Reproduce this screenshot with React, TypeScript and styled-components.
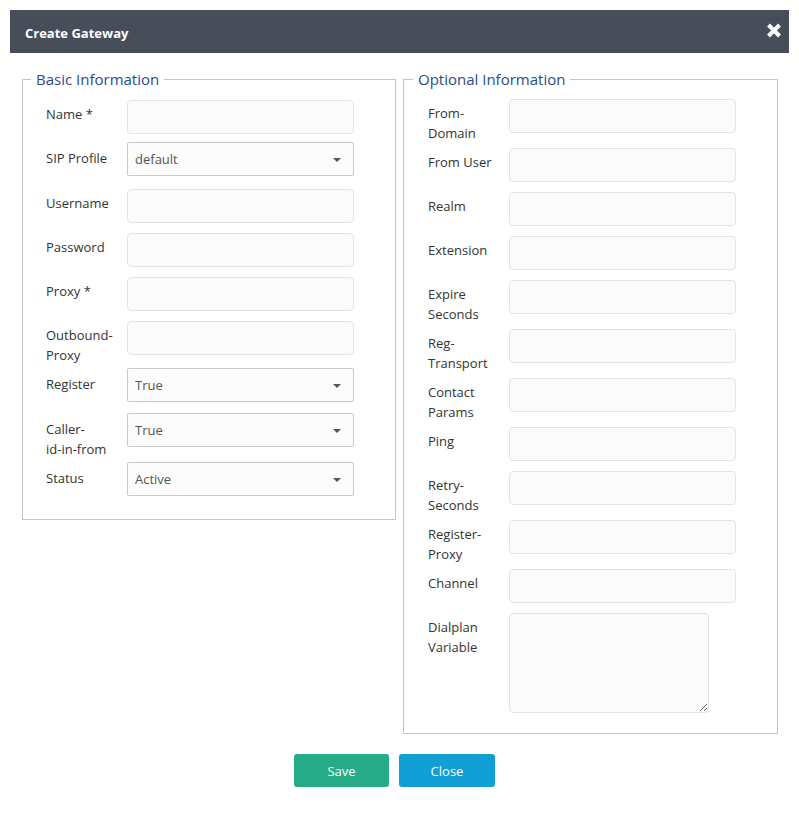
import React from 'react';
import styled, { createGlobalStyle } from 'styled-components';

const GlobalStyle = createGlobalStyle`
  html, body {
    margin: 0;
    padding: 0;
    background: #ffffff;
  }
  body {
    font-family: 'Open Sans', 'Liberation Sans', Arial, sans-serif;
    font-size: 13px;
    color: #333333;
  }
  * {
    box-sizing: border-box;
  }
`;

type Field = {
  label: string;
  kind: 'text' | 'select' | 'textarea';
  value?: string;
};

const basicFields: Field[] = [
  { label: 'Name *', kind: 'text' },
  { label: 'SIP Profile', kind: 'select', value: 'default' },
  { label: 'Username', kind: 'text' },
  { label: 'Password', kind: 'text' },
  { label: 'Proxy *', kind: 'text' },
  { label: 'Outbound-Proxy', kind: 'text' },
  { label: 'Register', kind: 'select', value: 'True' },
  { label: 'Caller-\nid-in-from', kind: 'select', value: 'True' },
  { label: 'Status', kind: 'select', value: 'Active' },
];

const optionalFields: Field[] = [
  { label: 'From-Domain', kind: 'text' },
  { label: 'From User', kind: 'text' },
  { label: 'Realm', kind: 'text' },
  { label: 'Extension', kind: 'text' },
  { label: 'Expire Seconds', kind: 'text' },
  { label: 'Reg-Transport', kind: 'text' },
  { label: 'Contact Params', kind: 'text' },
  { label: 'Ping', kind: 'text' },
  { label: 'Retry-Seconds', kind: 'text' },
  { label: 'Register-Proxy', kind: 'text' },
  { label: 'Channel', kind: 'text' },
  { label: 'Dialplan Variable', kind: 'textarea' },
];

const CloseIcon: React.FC = () => (
  <svg width="16" height="15" viewBox="0 0 16 15">
    <path d="M2.5 2 L13.5 13 M13.5 2 L2.5 13" stroke="#ffffff" strokeWidth="4" strokeLinecap="butt" />
  </svg>
);

const FormRow: React.FC<{ field: Field }> = ({ field }) => (
  <Row>
    <Label>{field.label}</Label>
    {field.kind === 'text' && (
      <ControlSlot>
        <TextInput type="text" />
      </ControlSlot>
    )}
    {field.kind === 'select' && (
      <SelectSlot>
        <SelectBox defaultValue={field.value}>
          <option>{field.value}</option>
        </SelectBox>
      </SelectSlot>
    )}
    {field.kind === 'textarea' && (
      <ControlSlot>
        <TextArea />
      </ControlSlot>
    )}
  </Row>
);

const App: React.FC = () => {
  return (
    <>
      <GlobalStyle />
      <Page>
        <Modal>
          <Header>
            <Title>Create Gateway</Title>
            <CloseButton type="button" aria-label="close">
              <CloseIcon />
            </CloseButton>
          </Header>

          <Body>
            <Section $inset={23} $top={11}>
              <Legend>Basic Information</Legend>
              {basicFields.map((f) => (
                <FormRow key={f.label} field={f} />
              ))}
            </Section>

            <Section $inset={24} $top={10}>
              <Legend>Optional Information</Legend>
              {optionalFields.map((f) => (
                <FormRow key={f.label} field={f} />
              ))}
            </Section>
          </Body>

          <Footer>
            <ActionButton type="button" $variant="save">Save</ActionButton>
            <ActionButton type="button" $variant="close">Close</ActionButton>
          </Footer>
        </Modal>
      </Page>
    </>
  );
};

const Page = styled.div`
  padding: 10px;
`;

const Modal = styled.div`
  background: #ffffff;
`;

const Header = styled.div`
  height: 43px;
  background: #474e59;
  display: flex;
  align-items: center;
  justify-content: space-between;
  padding: 0 7px 0 15px;
`;

const Title = styled.h4`
  margin: 3px 0 0;
  font-size: 13px;
  font-weight: 700;
  color: #ffffff;
`;

const CloseButton = styled.button`
  border: none;
  background: transparent;
  padding: 0;
  width: 16px;
  height: 15px;
  margin-top: -2px;
  display: flex;
  cursor: pointer;
`;

const Body = styled.div`
  display: grid;
  grid-template-columns: 374px 375px;
  column-gap: 7px;
  align-items: start;
  padding: 16px 11px 0 12px;
`;

const Section = styled.fieldset<{ $inset: number; $top: number }>`
  margin: 0;
  min-width: 0;
  border: 1px solid #c4c4c4;
  padding: ${(p) => p.$top}px 0 10px ${(p) => p.$inset}px;
`;

const Legend = styled.legend`
  margin-left: -15px;
  padding: 0 5px;
  font-size: 15px;
  line-height: 20px;
  color: #2b4b8c;
`;

const Row = styled.div`
  display: flex;
  align-items: flex-start;
`;

const Label = styled.label`
  width: 81px;
  flex-shrink: 0;
  padding: 4px 11px 5px 0;
  font-size: 13px;
  line-height: 20px;
  color: #333333;
  white-space: pre-line;
`;

const ControlSlot = styled.div`
  margin-bottom: 10px;
`;

const SelectSlot = styled.div`
  position: relative;
  margin: -2px 0 13px;

  &::after {
    content: '';
    position: absolute;
    right: 13px;
    top: 16px;
    border-left: 4px solid transparent;
    border-right: 4px solid transparent;
    border-top: 4px solid #555555;
    pointer-events: none;
  }
`;

const TextInput = styled.input`
  display: block;
  width: 227px;
  height: 34px;
  padding: 0 7px;
  border: 1px solid #e4e4e4;
  border-radius: 4px;
  background: #fbfbfb;
  font-family: inherit;
  font-size: 13px;
  outline: none;
`;

const SelectBox = styled.select`
  display: block;
  width: 227px;
  height: 34px;
  padding: 0 24px 0 7px;
  border: 1px solid #c9c9c9;
  border-radius: 2px;
  background: #fcfcfc;
  color: #555555;
  font-family: inherit;
  font-size: 13px;
  appearance: none;
  -webkit-appearance: none;
  outline: none;
`;

const TextArea = styled.textarea`
  display: block;
  width: 200px;
  height: 100px;
  padding: 6px 7px;
  border: 1px solid #e4e4e4;
  border-radius: 4px;
  background: #fbfbfb;
  font-family: inherit;
  font-size: 13px;
  outline: none;
`;

const Footer = styled.div`
  display: flex;
  justify-content: center;
  padding: 20px 0 20px;
`;

const ActionButton = styled.button<{ $variant: 'save' | 'close' }>`
  width: ${(p) => (p.$variant === 'save' ? '95px' : '96px')};
  height: 33px;
  margin-right: 10px;
  border: none;
  border-radius: 3px;
  background: ${(p) => (p.$variant === 'save' ? '#26ad88' : '#129fd5')};
  color: #ffffff;
  font-family: inherit;
  font-size: 13px;
  cursor: pointer;
`;

export default App;
